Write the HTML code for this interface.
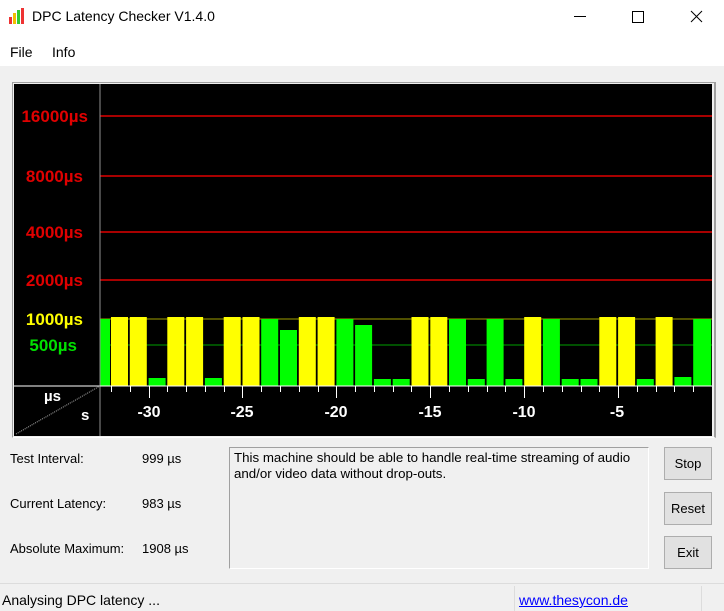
<!DOCTYPE html>
<html><head><meta charset="utf-8"><style>
body{margin:0;width:724px;height:611px;background:#f0f0f0;font-family:"Liberation Sans",sans-serif;position:relative;overflow:hidden;font-size:13px;color:#000}
.a{position:absolute}
.btn{position:absolute;left:664px;width:46px;height:31px;border:1px solid #adadad;background:#e1e1e1;text-align:center;line-height:31px;font-size:13px}
</style></head><body>
<div class="a" style="left:0;top:0;width:724px;height:66px;background:#fff"></div>
<svg class="a" style="left:9px;top:8px" width="16" height="16"><rect x="0" y="9" width="3" height="7" fill="#e33"/><rect x="4" y="5" width="3" height="11" fill="#f0c000"/><rect x="8" y="2" width="3" height="14" fill="#3c3"/><rect x="12" y="0" width="3" height="16" fill="#e33"/></svg>
<div class="a" style="left:32px;top:8px;font-size:14px">DPC Latency Checker V1.4.0</div>
<div class="a" style="left:574px;top:16px;width:12px;height:1px;background:#000"></div>
<div class="a" style="left:632px;top:11px;width:10px;height:10px;border:1px solid #000"></div>
<svg class="a" style="left:690px;top:10px" width="13" height="13"><path d="M1 1L12 12M12 1L1 12" stroke="#000" stroke-width="1"/></svg>
<div class="a" style="left:10px;top:44px;font-size:14px">File</div>
<div class="a" style="left:52px;top:44px;font-size:14px">Info</div>
<div class="a" style="left:12px;top:82px;width:701px;height:354px;border-top:1px solid #a0a0a0;border-left:1px solid #a0a0a0;border-right:2px solid #a0a0a0;border-bottom:1px solid #fff"></div>
<svg class="a" style="left:14px;top:84px" width="698" height="352" font-family="Liberation Sans" font-weight="bold">
<rect width="698" height="352" fill="#000"/>
<g stroke="#e00000" stroke-width="1.5"><line x1="86" y1="32" x2="698" y2="32"/><line x1="86" y1="92" x2="698" y2="92"/><line x1="86" y1="148" x2="698" y2="148"/><line x1="86" y1="196" x2="698" y2="196"/></g>
<line x1="86" y1="235" x2="698" y2="235" stroke="#a0a000"/>
<line x1="86" y1="261" x2="698" y2="261" stroke="#00a000"/>
<g font-size="17" text-anchor="end"><text x="74" y="38" fill="#e00000">16000µs</text><text x="69" y="98" fill="#e00000">8000µs</text><text x="69" y="154" fill="#e00000">4000µs</text><text x="69" y="202" fill="#e00000">2000µs</text><text x="69" y="241" fill="#ffff00">1000µs</text><text x="63" y="267" fill="#00e000">500µs</text></g>
<g id="bars"></g>
<line x1="86" y1="0" x2="86" y2="352" stroke="#909090"/>
<line x1="0" y1="302" x2="698" y2="302" stroke="#fff"/>
<line x1="2" y1="350" x2="86" y2="302" stroke="#aaa" stroke-dasharray="1,1"/>
<text x="30" y="317" fill="#fff" font-size="15">µs</text><text x="67" y="336" fill="#fff" font-size="15">s</text>
<g id="ticks" stroke="#fff"></g>
<g fill="#fff" font-size="16" text-anchor="middle"><text x="135" y="333">-30</text><text x="228" y="333">-25</text><text x="322" y="333">-20</text><text x="416" y="333">-15</text><text x="510" y="333">-10</text><text x="603" y="333">-5</text></g>
</svg>
<div class="a" style="left:10px;top:451px;font-size:13px">Test Interval:</div><div class="a" style="left:142px;top:451px;font-size:13px">999 µs</div>
<div class="a" style="left:10px;top:496px;font-size:13px">Current Latency:</div><div class="a" style="left:142px;top:496px;font-size:13px">983 µs</div>
<div class="a" style="left:10px;top:541px;font-size:13px">Absolute Maximum:</div><div class="a" style="left:142px;top:541px;font-size:13px">1908 µs</div>
<div class="a" style="left:229px;top:447px;border:1px solid #a0a0a0;border-right-color:#fff;border-bottom-color:#fff;padding:2px 4px;box-sizing:border-box;width:420px;height:122px;line-height:16px;font-size:13.3px">This machine should be able to handle real-time streaming of audio and/or video data without drop-outs.</div>
<div class="btn" style="top:447px">Stop</div>
<div class="btn" style="top:492px">Reset</div>
<div class="btn" style="top:536px">Exit</div>
<div class="a" style="left:0;top:583px;width:724px;height:1px;background:#dcdcdc"></div>
<div class="a" style="left:514px;top:586px;width:1px;height:25px;background:#dcdcdc"></div>
<div class="a" style="left:701px;top:586px;width:1px;height:25px;background:#dcdcdc"></div>
<div class="a" style="left:2px;top:592px;font-size:14px">Analysing DPC latency ...</div>
<div class="a" style="left:519px;top:592px;font-size:14px;color:#00f;text-decoration:underline">www.thesycon.de</div>
<script>
var s=[['y',0],['y',0],['g',2],['y',0],['y',0],['g',2],['y',0],['y',0],['g',1],['g',12],['y',0],['y',0],['g',1],['g',7],['g',3],['g',3],['y',0],['y',0],['g',1],['g',3],['g',1],['g',3],['y',0],['g',1],['g',3],['g',3],['y',0],['y',0],['g',3],['y',0],['g',4],['g',1]];
var h='';
h+='<rect x="86" y="235" width="10" height="67" fill="#00ff00"/>';
for(var i=0;i<32;i++){var x=97+i*18.78,t=s[i][0]=='y'?233:(s[i][1]==2?294:s[i][1]==3?295:s[i][1]==4?293:234+s[i][1]);
if(s[i][0]=='g'&&s[i][1]==12)t=246; if(s[i][0]=='g'&&s[i][1]==7)t=241;
var w=i==31?18:17;h+='<rect x="'+x.toFixed(1)+'" y="'+t+'" width="'+w+'" height="'+(302-t)+'" fill="'+(s[i][0]=='y'?'#ffff00':'#00ff00')+'"/>';}
document.getElementById('bars').innerHTML=h;
var k='';for(var n=0;n<32;n++){var x=Math.round(97+n*18.78)+0.5;var L=((n-2)%5==0)?12:6;k+='<line x1="'+x+'" y1="302" x2="'+x+'" y2="'+(302+L)+'"/>';}
document.getElementById('ticks').innerHTML=k;
</script>
</body></html>
